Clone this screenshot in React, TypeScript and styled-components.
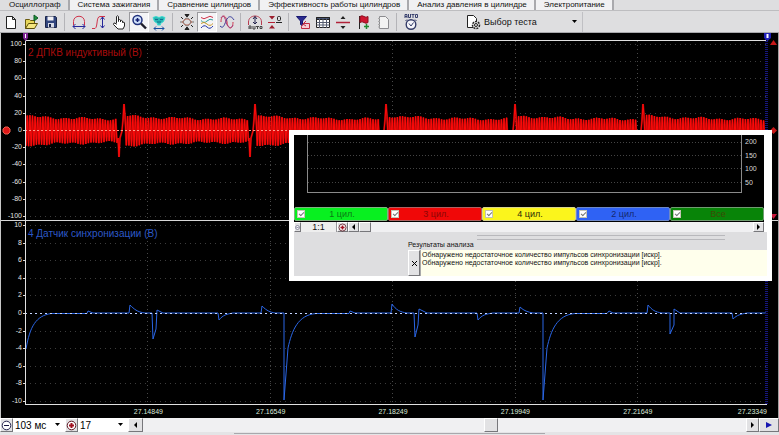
import React from "react";
import styled, { createGlobalStyle, css } from "styled-components";

const GlobalStyle = createGlobalStyle`
  *, *::before, *::after { box-sizing: border-box; }
  html, body, #root { height: 100%; margin: 0; }
  body { background: #dedee0; overflow: hidden; }
  body, button, select, input, textarea { font-family: "Liberation Sans", Arial, sans-serif; font-size: 9px; color: #111; }
  button { padding: 0; border: 0; background: none; }
`;

const Window = styled.div`
  display: flex;
  flex-direction: column;
  height: 100vh;
  min-height: 320px;
`;

const Tabs = styled.nav`
  display: flex;
  flex: none;
  height: 11px;
  padding-left: 1px;
  border-bottom: 1px solid #bdbdc0;
`;

const Tab = styled.button<{ $active?: boolean }>`
  flex: none;
  height: 10px;
  padding: 0 7px 1px 8px;
  font-size: 8px;
  line-height: 9px;
  white-space: nowrap;
  border-right: 2px solid #a9a9ad;
  background: ${(p) => (p.$active ? "#dedee0" : "#f1f1f3")};
`;

const Toolbar = styled.div`
  display: flex;
  align-items: center;
  flex: none;
  height: 22px;
  padding-left: 1px;
  background: #dedee0;
  border-bottom: 1px solid #a9a9ad;
`;

const ToolButton = styled.button<{ $pressed?: boolean }>`
  display: flex;
  align-items: center;
  justify-content: center;
  flex: none;
  width: 20px;
  height: 20px;
  ${(p) =>
    p.$pressed &&
    css`
      background: #f4f4f6;
      border: 1px solid;
      border-color: #9a9a9e #fff #fff #9a9a9e;
    `}
`;

const Separator = styled.span`
  flex: none;
  width: 1px;
  height: 18px;
  margin: 0 4px 0 3px;
  background: #b4b4b8;
`;

const TestPicker = styled.label`
  display: flex;
  align-items: center;
  flex: none;
  width: 162px;
  height: 20px;
  padding: 0 4px 0 43px;
  border-right: 1px solid #c0c0c4;
`;

const PlainSelect = styled.select`
  appearance: none;
  flex: 1;
  min-width: 0;
  height: 14px;
  padding: 0 2px;
  border: 0;
  background: transparent;
  font-size: 9px;
`;

const Scope = styled.main`
  position: relative;
  display: flex;
  flex-direction: column;
  flex: 1;
  min-height: 0;
  background: #000;
  border-left: 1px solid #c8c8c8;
  border-right: 1px solid #a0a0a0;
`;

const Channel = styled.section<{ $grow: number }>`
  position: relative;
  display: grid;
  grid-template-columns: 24px minmax(0, 1fr) 11px;
  grid-template-rows: minmax(0, 1fr);
  flex: ${(p) => p.$grow} 1 0;
  min-height: 0;
`;

const Scale = styled.div<{ $top?: number }>`
  display: flex;
  flex-direction: column;
  justify-content: space-between;
  align-items: flex-end;
  padding: ${(p) => p.$top ?? 0}px 3px 0 0;
  font-size: 7px;
  line-height: 8px;
  color: #e4e4e4;
`;

const Plot = styled.svg`
  display: block;
  width: 100%;
  height: 100%;
  overflow: visible;
`;

const ChannelName = styled.h2<{ $color: string; $top: number }>`
  position: absolute;
  left: 27px;
  top: ${(p) => p.$top}px;
  margin: 0;
  font-size: 10px;
  line-height: 12px;
  font-weight: 400;
  white-space: nowrap;
  color: ${(p) => p.$color};
`;

const Divider = styled.div`
  flex: none;
  height: 1px;
  background: #d8d8d8;
`;

const TimeScale = styled.div`
  display: flex;
  flex: none;
  height: 13px;
  padding: 3px 11px 0 calc(8% + 24px);
  font-size: 7px;
  line-height: 8px;
  color: #dcebdc;
  span {
    flex: 0 0 18%;
    text-align: center;
    white-space: nowrap;
  }
  span:last-child {
    flex: 1;
    text-align: right;
  }
`;

const MarkerLayer = styled.svg<{ $x: string; $y: number }>`
  position: absolute;
  left: ${(p) => p.$x};
  top: ${(p) => p.$y}px;
  width: 9px;
  height: 9px;
`;

const BottomBar = styled.footer`
  display: flex;
  flex: none;
  height: 14px;
  background: #eaeaec;
`;

const BottomEdge = styled.div`
  flex: none;
  height: 3px;
  padding: 1px 30% 0;
  background: #e4e4e6;
  &::before {
    content: "";
    display: block;
    height: 1px;
    background: #a8a8ac;
  }
`;

const RaisedButton = styled.button<{ $w: number }>`
  display: flex;
  align-items: center;
  justify-content: center;
  flex: none;
  width: ${(p) => p.$w}px;
  background: #e2e2e4;
  border: 1px solid;
  border-color: #fff #77777b #77777b #fff;
`;

const Combo = styled.label<{ $w: number }>`
  display: flex;
  align-items: center;
  flex: none;
  width: ${(p) => p.$w}px;
  padding-right: 4px;
  background: #fff;
  select {
    font-size: 10px;
    color: #000;
  }
`;

const Track = styled.div`
  display: flex;
  flex: 1;
  min-width: 0;
  background: #f0f0f2;
`;

const TrackGap = styled.span<{ $grow: number }>`
  flex: ${(p) => p.$grow} 1 0;
`;

const Inset = styled.section`
  position: absolute;
  left: 288px;
  right: 6px;
  top: 97px;
  height: 151px;
  display: flex;
  flex-direction: column;
  padding: 5px;
  background: #fff;
`;

const InsetBlack = styled.div`
  display: grid;
  grid-template-columns: minmax(0, 1fr) 22px;
  flex: none;
  height: 72px;
  margin-right: 3px;
  padding-left: 13px;
  background: #000;
`;

const InsetFrame = styled.div`
  height: 58px;
  border: 1px solid #8a8a8a;
  border-top: 0;
`;

const InsetScale = styled.div`
  display: flex;
  flex-direction: column;
  justify-content: space-between;
  height: 52px;
  padding: 2px 0 0 3px;
  font-size: 7px;
  line-height: 9px;
  color: #d8d8d8;
`;

const Cylinders = styled.div`
  display: grid;
  grid-template-columns: repeat(5, minmax(0, 1fr));
  flex: none;
  height: 15px;
  margin-right: 3px;
  background: #000;
  padding-bottom: 1px;
`;

const Cylinder = styled.label<{ $bg: string; $edge: string; $ink: string }>`
  display: flex;
  align-items: center;
  padding-right: 8px;
  background: ${(p) => p.$bg};
  border: 1px solid ${(p) => p.$edge};
  border-radius: 2px;
  color: ${(p) => p.$ink};
  span {
    flex: 1;
    text-align: center;
    line-height: 10px;
  }
`;

const Tick = styled.input`
  appearance: none;
  flex: none;
  width: 8px;
  height: 8px;
  margin: 0 0 0 2px;
  background: #fff;
  border: 1px solid #c4c4b4;
  &:checked::before {
    content: "";
    display: block;
    width: 5px;
    height: 3px;
    margin: 1px 0 0 1px;
    border: solid #777;
    border-width: 0 0 1px 1px;
    transform: rotate(-45deg);
  }
`;

const InsetScroll = styled.div`
  display: flex;
  flex: none;
  height: 10px;
  margin-right: 3px;
`;

const Ratio = styled.output`
  flex: none;
  width: 36px;
  line-height: 10px;
  text-align: center;
  background: #eee;
  border-right: 1px solid #99999d;
`;

const InsetPanel = styled.div`
  flex: 1;
  min-height: 0;
  display: flex;
  flex-direction: column;
  background: #dedee0;
  padding-left: 114px;
`;

const Splitter = styled.div`
  flex: none;
  height: 5px;
  margin: 3px 42px 0 69px;
  border: 1px solid #b8b8bc;
  border-width: 1px 0;
`;

const ResultsTitle = styled.label`
  flex: none;
  line-height: 10px;
  font-size: 7px;
`;

const Results = styled.div`
  display: flex;
  flex: 1;
  min-height: 0;
`;

const ResultsText = styled.textarea`
  flex: 1;
  min-width: 0;
  padding: 1px;
  border: 0;
  border-left: 1px solid #aaa;
  resize: none;
  overflow: hidden;
  background: #ffffec;
  font-size: 7px;
  line-height: 8px;
`;

const Glyph = ({ children, size = 18 }: { children: React.ReactNode; size?: number }) => (
  <svg width={size} height={size} viewBox={`0 0 ${size} ${size}`} fill="none" stroke="#222" strokeWidth="1" aria-hidden="true">
    {children}
  </svg>
);

const Caret = ({ dir = "down", color = "#000" }: { dir?: "down" | "left" | "right"; color?: string }) => {
  const d = { down: "M0 1H5L2.5 4Z", left: "M4 0V6L1 3Z", right: "M1 0V6L4 3Z" }[dir];
  return (
    <svg width="6" height="6" viewBox="0 0 6 6" aria-hidden="true">
      <path d={d} fill={color} />
    </svg>
  );
};

const ZoomSign = ({ plus, size = 11 }: { plus?: boolean; size?: number }) => (
  <svg width={size} height={size} viewBox="0 0 11 11" fill="none" aria-hidden="true">
    <circle cx="5.5" cy="5.5" r="4.3" stroke={plus ? "#5a1420" : "#23234e"} fill="#fff" />
    <path d={plus ? "M3 5.5H8M5.5 3V8" : "M3 5.5H8"} stroke={plus ? "#a01020" : "#151540"} strokeWidth={plus ? 2 : 1} />
  </svg>
);

const icons: Record<string, React.ReactNode> = {
  newFile: <path d="M4.5 3.5h6l3 3v9h-9zM10.500 3.500v3h3" fill="#fff" />,
  open: (
    <>
      <path d="M3.500 15.500v-9h4l1 1h4v3" fill="#e7d65a" stroke="#6b5b10" />
      <path d="M3.500 15.500l3-5h9l-3 5z" fill="#f4e680" stroke="#5a4c08" />
      <path d="M12 2v6l4-3z" fill="#1f8f3c" stroke="#0c5a22" />
    </>
  ),
  save: (
    <>
      <path d="M3.500 3.500h10l1 1v10h-11z" fill="#31457e" stroke="#1a2448" />
      <path d="M5.500 3.500h6v4h-6z" fill="#f2f2f6" stroke="none" />
      <path d="M6 10h6v4.500h-6z" fill="#d6dae6" stroke="none" />
      <path d="M7 11h2v3h-2z" fill="#1a2448" stroke="none" />
    </>
  ),
  period: (
    <>
      <path d="M3.500 12.500V8.500C3.500 1.500 14.500 1.500 14.500 8.500V12.500" stroke="#d0334a" />
      <path d="M3 13.500H15M5.500 11L3 13.500L5.500 16M12.500 11L15 13.500L12.500 16" stroke="#26279a" />
    </>
  ),
  amplitude: (
    <>
      <path d="M2 15.500H5C8 14 6 3.500 10 3.500H15" stroke="#d0334a" />
      <path d="M12.500 4V15M10.500 6.500L12.500 4L14.500 6.500M10.500 12.500L12.500 15L14.500 12.500" stroke="#26279a" />
    </>
  ),
  hand: (
    <path
      d="M6.500 10.500V3.500Q7.500 2 8.500 3.500V8.500V7Q9.500 6 10.500 7V9V7.500Q11.500 7 12.500 8V9.500Q14.500 8.500 14.500 10V13L13 16H8L3.500 11.500Q3.500 9.500 5 10L6.500 11.500"
      fill="#fff"
    />
  ),
  zoom: (
    <>
      <circle cx="7.500" cy="7" r="4.500" fill="#cfe0fa" stroke="#20307c" strokeWidth="1.500" />
      <path d="M5.500 7h4M7.500 5v4" stroke="#101c70" strokeWidth="1.500" />
      <path d="M11 10.500l5 5" stroke="#1d1d2a" strokeWidth="2.400" />
    </>
  ),
  snapshot: (
    <>
      <path d="M3 4.500l3-1 3 1 3-1 3 1-1.500 4-3 2v1.500h-3V10.500l-3-2z" fill="#27b6b3" stroke="#3adbd0" />
      <path d="M5 6.500h3M10 6.500h3M7 9h4" stroke="#116c8e" />
      <path d="M4 15.500h10M6 13.500L4 15.500l2 2M12 13.500l2 2-2 2" stroke="#164ea0" />
    </>
  ),
  fit: (
    <>
      <path d="M2 9h3Q9 1 13 9h3M5 9Q9 17 13 9" stroke="#77706a" />
      <path d="M4 9Q9 3 14 9Q9 15 4 9" stroke="#bd8074" />
      <path d="M7 1.500h4L9 4zM7 16.500h4L9 14z" fill="#222" stroke="#222" />
      <path d="M3 4l2 2M15 4l-2 2M3 14l2-2M15 14l-2-2" />
    </>
  ),
  stacked: (
    <>
      <path d="M3 4.500Q6 7 9 4.500T15 4.500" stroke="#d0334a" />
      <path d="M3 7.500Q6 11 9 8T15 7" stroke="#2c9c9a" />
      <path d="M3 10.500Q6 8 9 11T15 10.500" stroke="#c99a2c" />
      <path d="M3 15Q6 11 9 14T15 13" stroke="#2638a8" />
    </>
  ),
  overlaid: (
    <>
      <path d="M3 9C3 1 8 1 9 9S15 17 15 9" stroke="#d0334a" />
      <path d="M2 13C5 16 6 13 8 8S13 2 16 7" stroke="#393c9c" />
      <path d="M3 5C5 1 7 4 8 9S13 17 15 12" stroke="#a8417e" />
    </>
  ),
  auto: (
    <>
      <path d="M2.500 12V9C2.500 1 15.500 1 15.500 9V12" stroke="#b73d50" />
      <path d="M9 3.500V11M7 6l2-2.500L11 6M7 9l2 2 2-2" stroke="#20204a" />
      <path d="M3 16V13h2v3M3 15h2M7 13v3h2v-3M10 13.500h3M11.500 13v3M14 13.500h2v2h-2z" stroke="#444" />
    </>
  ),
  zero: (
    <>
      <path d="M3 3h6L6 6.500zM3 15.500h6L6 12z" fill="#9c1f2e" stroke="none" />
      <path d="M2 9.500H9" stroke="#b52034" />
      <path d="M10 9.500h6" />
      <rect x="11.500" y="3.500" width="3" height="4" rx="1" />
    </>
  ),
  filter: (
    <>
      <path d="M2.500 3.500h10L8.500 8v5l-2-1.500V8z" fill="#2a2a8e" stroke="#181870" />
      <path d="M9.500 10.500h6v5h-8v-2zM12 8l-3 3 3 2" fill="#f6cfd6" stroke="#c02a40" />
    </>
  ),
  table: (
    <>
      <path d="M2.500 4.500h13v10h-13z" fill="#fff" />
      <path d="M2.500 4.500h13v2h-13z" fill="#3e4c70" />
      <path d="M2.500 9.500h13M2.500 12h13M5.500 5v10M9 5v10M12.500 5v10" stroke="#555c70" />
    </>
  ),
  split: (
    <>
      <path d="M2 9.500h14" stroke="#b02038" strokeWidth="1.500" />
      <path d="M6.500 6h5L9 3zM6.500 13h5L9 16z" fill="#222" stroke="none" />
    </>
  ),
  flag: (
    <>
      <path d="M5.500 3v13" />
      <path d="M6 3.500q2-1.500 4 0t4 0v6q-2 1.500-4 0t-4 0z" fill="#cf1530" stroke="#8c1020" />
      <path d="M12.500 11v5M10 13.500h5" stroke="#218a30" strokeWidth="1.500" />
    </>
  ),
  note: (
    <>
      <path d="M5.500 3.500h6l3 3v9h-9z" fill="#f3f3f3" stroke="#8c8c90" />
      <path d="M4 5.500h2M4 8.500h2M4 11.500h2M4 14h2" stroke="#aaa" />
    </>
  ),
  timer: (
    <>
      <path d="M3 5V1.500h2V5M3 3.500h2M6.500 1v3.500h2V1M9.500 1.500h3M11 1.500V5M13.500 1.500h2v3h-2z" stroke="#38406e" />
      <circle cx="9" cy="11.500" r="4.800" fill="#f5f5fa" stroke="#343c68" strokeWidth="1.400" />
      <path d="M7 10.500l2 2.500 2.500-3.500M5 6.500L3.500 8M13 6.500L14.500 8" stroke="#343c68" />
    </>
  ),
};

const toolGroups: { id: string; label: string; pressed?: boolean }[][] = [
  [
    { id: "newFile", label: "Новый" },
    { id: "open", label: "Открыть" },
    { id: "save", label: "Сохранить" },
  ],
  [
    { id: "period", label: "Период" },
    { id: "amplitude", label: "Амплитуда" },
    { id: "hand", label: "Перемещение" },
    { id: "zoom", label: "Масштаб", pressed: true },
    { id: "snapshot", label: "Синхронизация" },
  ],
  [
    { id: "fit", label: "Вписать" },
    { id: "stacked", label: "Раздельно", pressed: true },
    { id: "overlaid", label: "Вместе" },
  ],
  [
    { id: "auto", label: "Авто" },
    { id: "zero", label: "Ноль" },
  ],
  [
    { id: "filter", label: "Фильтр" },
    { id: "table", label: "Таблица" },
    { id: "split", label: "Разделить" },
    { id: "flag", label: "Метка" },
    { id: "note", label: "Заметка" },
  ],
  [{ id: "timer", label: "Таймер" }],
];

const tabs = [
  "Осциллограф",
  "Система зажигания",
  "Сравнение цилиндров",
  "Эффективность работы цилиндров",
  "Анализ давления в цилиндре",
  "Электропитание",
];

const PLOT_W = 742;
const timeLines = [122, 245, 367, 490, 612];
const triggers = [96, 227, 358, 487, 615];

function crankSignal(zero: number) {
  const parts: string[] = [`M1 ${zero}`];
  let up = false;
  for (let x = 1; x < PLOT_W - 2; ) {
    const trigger = triggers.find((t) => x >= t - 3 && x <= t + 3);
    if (trigger !== undefined) {
      parts.push(
        `L${trigger - 3} ${zero + 8}L${trigger - 2} ${zero + 27}L${trigger - 1} ${zero + 8}`,
        `L${trigger + 1} ${zero + 1}L${trigger + 2} ${zero - 10}L${trigger + 3} ${zero - 26}`,
      );
      x = trigger + 4;
      continue;
    }
    const last = [...triggers].reverse().find((t) => t < x) ?? -8;
    const decay = Math.exp(-(x - last) / 45);
    const amp = 10.5 + 4 * decay + 1.6 * Math.sin(x / 4.1) * Math.cos(x / 9);
    parts.push(`L${x.toFixed(1)} ${(zero + (up ? -amp : amp + 1.5)).toFixed(1)}`);
    up = !up;
    x += 1.3;
  }
  return parts.join("");
}

const crankPath = crankSignal(97);

const syncPath =
  "M1 128C5 105 11 95 26 92.500H62L63 90L68 92H104L105 84C109 88 112 91 120 92H127L128 118L131 108L132 89L138 92" +
  "H193L194 99C198 94 202 93 208 92H236L237 85C242 90 245 91 250 92H259V179L263 127C267 109 273 94 291 92.500H324L325 90L330 92" +
  "H366L367 83C371 89 375 91 382 92H389L390 116L393 104L394 88L402 92H452L453 99C457 94 461 93 468 92H494L495 86C499 90 503 91 508 92" +
  "H518V179L522 127C526 109 532 94 550 92.500H582L584 90L588 92H622L623 84C627 89 630 91 637 92H645V113L649 104V88L655 92" +
  "H707L708 98C712 94 716 93 722 92H741";

const ticksUpper = [100, 80, 60, 40, 20, 0, -20, -40, -60, -80, -100];
const ticksLower = [10, 8, 6, 4, 2, 0, -2, -4, -6, -8, -10];

interface PlotProps {
  height: number;
  first: number;
  step: number;
  children: React.ReactNode;
}

const Grid = ({ height, first, step, children }: PlotProps) => (
  <Plot viewBox={`0 0 ${PLOT_W} ${height}`} preserveAspectRatio="none" shapeRendering="crispEdges">
    {ticksUpper.map((t, i) => {
      const y = Math.round(first + i * step) + 0.5;
      return (
        <g key={t}>
          <path d={`M0 ${y}H${PLOT_W}`} stroke="#3c3c3c" strokeDasharray="1 4" />
          <path d={`M-2 ${y}H1`} stroke="#ddd" />
        </g>
      );
    })}
    {timeLines.map((x) => (
      <path key={x} d={`M${x + 0.5} 8V${height}`} stroke="#484848" strokeDasharray="1 3" />
    ))}
    {children}
    <path d={`M${PLOT_W - 0.5} 0V${height}`} stroke="#16167c" strokeWidth="3" strokeDasharray="1 1" />
  </Plot>
);

const cylinders = [
  { name: "1 цил.", bg: "#08f020", edge: "#7fb47f", ink: "#0a7a14" },
  { name: "3 цил.", bg: "#f00808", edge: "#b06060", ink: "#8c0606" },
  { name: "4 цил.", bg: "#fbf51c", edge: "#d8d48c", ink: "#2c2a08" },
  { name: "2 цил.", bg: "#2f62f4", edge: "#6d88c8", ink: "#14286e" },
  { name: "Все", bg: "#088408", edge: "#6f9c6f", ink: "#3d4a06" },
];

const findings =
  "Обнаружено недостаточное количество импульсов синхронизации [искр].\nОбнаружено недостаточное количество импульсов синхронизации [искр].";

export default function App() {
  return (
    <Window>
      <GlobalStyle />
      <Tabs>
        {tabs.map((t, i) => (
          <Tab key={t} $active={i === 0}>
            {t}
          </Tab>
        ))}
      </Tabs>
      <Toolbar>
        {toolGroups.map((group, g) => (
          <React.Fragment key={g}>
            {g > 0 && <Separator />}
            {group.map((tool) => (
              <ToolButton key={tool.id} aria-label={tool.label} $pressed={tool.pressed}>
                <Glyph>{icons[tool.id]}</Glyph>
              </ToolButton>
            ))}
          </React.Fragment>
        ))}
        <TestPicker>
          <Glyph>
            <path d="M3.500 2.500h6l3 3v9h-9z" fill="#fff" />
            <circle cx="12" cy="12" r="3.500" fill="#e4e4e4" strokeWidth="1.500" strokeDasharray="2 1" />
            <circle cx="12" cy="12" r="1.500" />
          </Glyph>
          <PlainSelect aria-label="Выбор теста">
            <option>Выбор теста</option>
          </PlainSelect>
          <Caret />
        </TestPicker>
      </Toolbar>

      <Scope>
        <Channel $grow={187}>
          <Scale $top={7}>
            {ticksUpper.map((t) => (
              <span key={t}>{t}</span>
            ))}
          </Scale>
          <Grid height={187} first={11} step={17.2}>
            <path d={crankPath} fill="none" stroke="#d40808" strokeOpacity="0.7" strokeWidth="2" shapeRendering="auto" />
            <path d={crankPath} fill="none" stroke="#ff0a0a" shapeRendering="auto" />
            <path d="M0 97.500H742" stroke="#ff9a8a" strokeDasharray="2 2" />
            <path d="M0 7.500H741M0.500 3V187" stroke="#e0e0e0" />
          </Grid>
          <ChannelName $color="#a80c0c" $top={14}>
            2 ДПКВ индуктивный (В)
          </ChannelName>
          <MarkerLayer $x="1px" $y={93} viewBox="0 0 9 9">
            <path d="M3 1h3l2 2v3L6 8H3L1 6V3z" fill="#e01818" stroke="#e86050" />
          </MarkerLayer>
          <MarkerLayer $x="20px" $y={0} viewBox="0 0 9 9">
            <path d="M2 0h5v5L4.500 8L2 5z" fill="#7c2290" />
            <path d="M4.500 1v4" stroke="#fff" />
          </MarkerLayer>
          <MarkerLayer $x="calc(100% - 15px)" $y={0} viewBox="0 0 9 9">
            <path d="M1 0h7v5L4.500 8L1 5z" fill="#2020b8" />
            <path d="M4.500 1v4" stroke="#fff" strokeWidth="2" />
          </MarkerLayer>
          <MarkerLayer $x="calc(100% - 9px)" $y={6} viewBox="0 0 9 9">
            <path d="M4.500 1L8 6H1z" fill="#c81818" />
          </MarkerLayer>
          <MarkerLayer $x="calc(100% - 9px)" $y={93} viewBox="0 0 9 9">
            <path d="M4.500 1L8 4.500L4.500 8L1 4.500z" fill="#c81818" />
          </MarkerLayer>
          <MarkerLayer $x="calc(100% - 9px)" $y={178} viewBox="0 0 9 9">
            <path d="M4.500 8L8 3H1z" fill="#c8183c" />
          </MarkerLayer>
        </Channel>
        <Divider />
        <Channel $grow={184}>
          <Scale>
            {ticksLower.map((t) => (
              <span key={t}>{t}</span>
            ))}
          </Scale>
          <Grid height={184} first={4} step={17.6}>
            <path d={syncPath} fill="none" stroke="#2a66e6" shapeRendering="auto" />
            <path d="M0 92.500H742" stroke="#c4d4ff" strokeDasharray="2 3" />
            <path d="M0 183.500H742M0.500 0V184" stroke="#e0e0e0" />
          </Grid>
          <ChannelName $color="#2c58c8" $top={7}>
            4 Датчик синхронизации (В)
          </ChannelName>
        </Channel>
        <TimeScale>
          {["27.14849", "27.16549", "27.18249", "27.19949", "27.21649", "27.23349"].map((t) => (
            <span key={t}>{t}</span>
          ))}
        </TimeScale>

        <Inset>
          <InsetBlack>
            <InsetFrame>
              <svg width="100%" height="57" shapeRendering="crispEdges" aria-hidden="true">
                {[7.5, 20.5, 33.5, 47.5].map((y) => (
                  <line key={y} x1="0" x2="100%" y1={y} y2={y} stroke="#444" strokeDasharray="1 2" />
                ))}
              </svg>
            </InsetFrame>
            <InsetScale>
              {[200, 150, 100, 50].map((v) => (
                <span key={v}>{v}</span>
              ))}
            </InsetScale>
          </InsetBlack>
          <Cylinders>
            {cylinders.map((c) => (
              <Cylinder key={c.name} $bg={c.bg} $edge={c.edge} $ink={c.ink}>
                <Tick type="checkbox" defaultChecked />
                <span>{c.name}</span>
              </Cylinder>
            ))}
          </Cylinders>
          <InsetScroll>
            <RaisedButton $w={7} aria-label="Уменьшить">
              <ZoomSign size={9} />
            </RaisedButton>
            <Ratio>1:1</Ratio>
            <RaisedButton $w={11} aria-label="Увеличить">
              <ZoomSign plus size={9} />
            </RaisedButton>
            <RaisedButton $w={11} aria-label="Влево">
              <Caret dir="left" />
            </RaisedButton>
            <Track>
              <RaisedButton $w={12} aria-label="Ползунок" />
            </Track>
            <RaisedButton $w={11} aria-label="Вправо">
              <Caret dir="right" />
            </RaisedButton>
          </InsetScroll>
          <InsetPanel>
            <Splitter />
            <ResultsTitle htmlFor="results">Результаты анализа</ResultsTitle>
            <Results>
              <RaisedButton $w={12} aria-label="Закрыть">
                <Glyph size={7}>
                  <path d="M1 1L6 6M6 1L1 6" stroke="#000" />
                </Glyph>
              </RaisedButton>
              <ResultsText id="results" readOnly wrap="off" defaultValue={findings} />
            </Results>
          </InsetPanel>
        </Inset>
      </Scope>

      <BottomBar>
        <RaisedButton $w={13} aria-label="Сжать время">
          <ZoomSign />
        </RaisedButton>
        <Combo $w={52}>
          <PlainSelect aria-label="Развёртка">
            <option>103 мс</option>
          </PlainSelect>
          <Caret />
        </Combo>
        <RaisedButton $w={13} aria-label="Растянуть время">
          <ZoomSign plus />
        </RaisedButton>
        <Combo $w={50}>
          <PlainSelect aria-label="Усиление">
            <option>17</option>
          </PlainSelect>
          <Caret />
        </Combo>
        <RaisedButton $w={15} aria-label="Назад">
          <Caret dir="left" />
        </RaisedButton>
        <Track>
          <TrackGap $grow={341} />
          <RaisedButton $w={14} aria-label="Ползунок прокрутки" />
          <TrackGap $grow={248} />
        </Track>
        <RaisedButton $w={13} aria-label="Вперёд">
          <Caret dir="right" />
        </RaisedButton>
        <RaisedButton $w={20} aria-label="Воспроизвести">
          <svg width="8" height="8" viewBox="0 0 8 8" aria-hidden="true">
            <path d="M1 1V7L7 4Z" fill="#1616b0" />
          </svg>
        </RaisedButton>
      </BottomBar>
      <BottomEdge />
    </Window>
  );
}
